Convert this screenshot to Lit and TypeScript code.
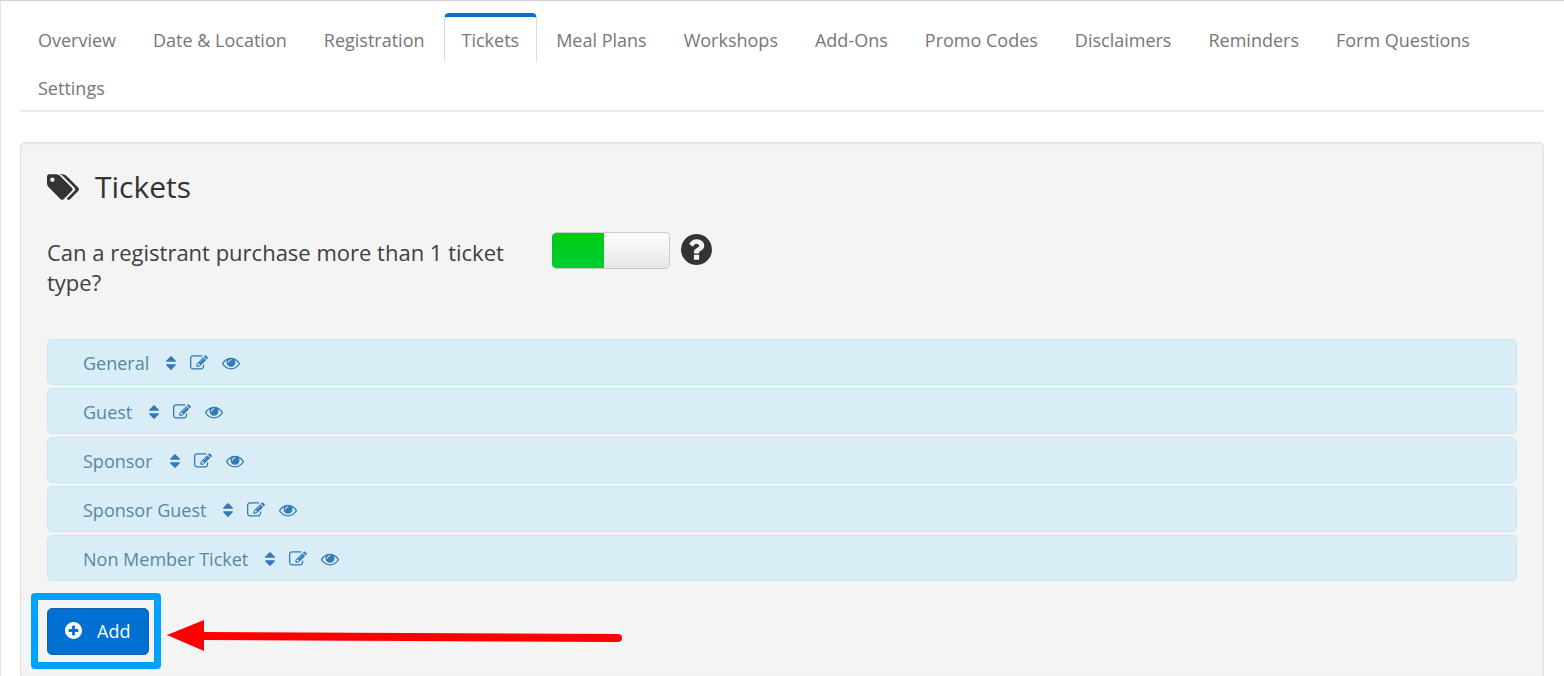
import { LitElement, html, css, svg } from "lit";
import { customElement, property, state } from "lit/decorators.js";

const DISC =
  "M1664 896q0 209-103 385.5t-279.5 279.5-385.5 103-385.5-103-279.5-279.5-103-385.5 103-385.5 279.5-279.5 385.5-103 385.5 103 279.5 279.5 103 385.5z";

const ICONS: Record<string, { box: string; d: string }> = {
  tags: {
    box: "-64 128 1899 1515",
    d: "M384 448q0-53-37.5-90.5t-90.5-37.5-90.5 37.5-37.5 90.5 37.5 90.5 90.5 37.5 90.5-37.5 37.5-90.5zm1067 576q0 53-37 90l-491 492q-39 37-91 37-53 0-90-37l-715-716q-38-37-64.5-101t-26.5-117v-416q0-52 38-90t90-38h416q53 0 117 26.5t102 64.5l715 714q37 39 37 91zm384 0q0 53-37 90l-491 492q-39 37-91 37-36 0-59-14t-53-45l470-470q37-37 37-90 0-52-37-91l-715-714q-38-38-102-64.5t-117-26.5h224q53 0 117 26.5t102 64.5l715 714q37 39 37 91z",
  },
  sort: {
    box: "384 0 1024 1792",
    d: "M1408 1088q0 26-19 45l-448 448q-19 19-45 19t-45-19l-448-448q-19-19-19-45t19-45 45-19h896q26 0 45 19t19 45zm0-384q0 26-19 45t-45 19h-896q-26 0-45-19t-19-45 19-45l448-448q19-19 45-19t45 19l448 448q19 19 19 45z",
  },
  edit: {
    box: "0 0 1792 1792",
    d: "M888 1184l116-116-152-152-116 116v56h96v96h56zm440-720q-16-16-33 1l-350 350q-17 17-1 33t33-1l350-350q17-17 1-33zm80 594v190q0 119-84.5 203.5t-203.5 84.5h-832q-119 0-203.5-84.5t-84.5-203.5v-832q0-119 84.5-203.5t203.5-84.5h832q63 0 117 25 15 7 18 23 3 17-9 29l-49 49q-14 14-32 8-23-6-45-6h-832q-66 0-113 47t-47 113v832q0 66 47 113t113 47h832q66 0 113-47t47-113v-126q0-13 9-22l64-64q15-15 35-7t20 29zm-96-738l288 288-672 672h-288v-288zm444 132l-92 92-288-288 92-92q28-28 68-28t68 28l152 152q28 28 28 68t-28 68z",
  },
  eye: {
    box: "0 0 1792 1792",
    d: "M1664 960q-152-236-381-353 61 104 61 225 0 185-131.5 316.5t-316.5 131.5-316.5-131.5-131.5-316.5q0-121 61-225-229 117-381 353 133 205 333.5 326.5t434.5 121.5 434.5-121.5 333.5-326.5zm-720-384q0-20-14-34t-34-14q-125 0-214.5 89.5t-89.5 214.5q0 20 14 34t34 14 34-14 14-34q0-86 61-147t147-61q20 0 34-14t14-34zm848 384q0 34-20 69-140 230-376.5 368.5t-499.5 138.5-499.5-139-376.5-368q-20-35-20-69t20-69q140-229 376.5-368t499.5-139 499.5 139 376.5 368q20 35 20 69z",
  },
  question: {
    box: "128 128 1536 1536",
    d: "M1024 1376v-192q0-14-9-23t-23-9h-192q-14 0-23 9t-9 23v192q0 14 9 23t23 9h192q14 0 23-9t9-23zm256-672q0-88-55.5-163t-138.5-116-170-41q-243 0-371 213-15 24 8 42l132 100q7 6 19 6 16 0 25-12 53-68 86-92 34-24 86-24 48 0 85.5 26t37.5 59q0 38-20 61t-68 45q-63 28-115.5 86.5t-52.5 125.5v36q0 14 9 23t23 9h192q14 0 23-9t9-23q0-19 21.5-49.5t54.5-49.5q32-18 49-28.5t46-35 44.5-48 28-60.5 12.5-81z" + DISC,
  },
  plus: {
    box: "128 128 1536 1536",
    d: "M1344 960v-128q0-26-19-45t-45-19h-256v-256q0-26-19-45t-45-19h-128q-26 0-45 19t-19 45v256h-256q-26 0-45 19t-19 45v128q0 26 19 45t45 19h256v256q0 26 19 45t45 19h128q26 0 45-19t19-45v-256h256q26 0 45-19t19-45z" + DISC,
  },
};

@customElement("ui-icon")
class UiIcon extends LitElement {
  @property() name = "";

  static styles = css`
    :host {
      display: block;
      flex: none;
    }
    .glyph {
      display: block;
      width: 100%;
      height: 100%;
      fill: currentColor;
      fill-rule: evenodd;
    }
  `;

  render() {
    const icon = ICONS[this.name];
    return html`<svg class="glyph" viewBox=${icon.box} aria-hidden="true">
      ${svg`<path d=${icon.d}></path>`}
    </svg>`;
  }
}

@customElement("ticket-row")
class TicketRow extends LitElement {
  @property() name = "";

  static styles = css`
    :host {
      display: flex;
      align-items: center;
      gap: 14px;
      box-sizing: border-box;
      min-height: 46px;
      padding: 2px 35px 0;
      border: 1px solid #c5e9f1;
      border-radius: 5px;
      background: #d9edf7;
      color: #5688a3;
      font-size: 18px;
      line-height: 24px;
    }
    .name {
      margin-right: 3px;
    }
    .action {
      display: block;
      padding: 0;
      border: 0;
      background: none;
      color: #337ab7;
      cursor: pointer;
    }
    .medium {
      width: 18px;
      height: 18px;
    }
    .narrow {
      width: 10px;
      height: 18px;
    }
  `;

  render() {
    return html`
      <span class="name">${this.name}</span>
      <button class="action" aria-label="Reorder ${this.name}"><ui-icon class="narrow" name="sort"></ui-icon></button>
      <button class="action" aria-label="Edit ${this.name}"><ui-icon class="medium" name="edit"></ui-icon></button>
      <button class="action" aria-label="Show ${this.name}"><ui-icon class="medium" name="eye"></ui-icon></button>
    `;
  }
}

@customElement("app-root")
class AppRoot extends LitElement {
  @state() private active = "Tickets";
  @state() private multiple = true;

  private tabs = [
    "Overview",
    "Date & Location",
    "Registration",
    "Tickets",
    "Meal Plans",
    "Workshops",
    "Add-Ons",
    "Promo Codes",
    "Disclaimers",
    "Reminders",
    "Form Questions",
    "Settings",
  ];
  private tickets = ["General", "Guest", "Sponsor", "Sponsor Guest", "Non Member Ticket"];

  static styles = css`
    :host {
      display: flex;
      flex-direction: column;
      box-sizing: border-box;
      min-height: 100vh;
      padding: 12px 20px 0 19px;
      border-top: 1px solid #cfcfcf;
      border-left: 1px solid #e4e4e4;
      background: #fff;
      color: #333;
      font-family: "Open Sans", "Noto Sans", sans-serif;
      font-size: 18px;
    }
    .tabs {
      display: flex;
      flex-wrap: wrap;
      column-gap: 1px;
      border-bottom: 2px solid #ebebeb;
    }
    .tab {
      box-sizing: border-box;
      height: 49px;
      margin-bottom: -1px;
      padding: 11px 17px 0;
      border: 1px solid transparent;
      border-top: 4px solid transparent;
      border-bottom: 0;
      border-radius: 5px 5px 0 0;
      color: #777;
      line-height: 24px;
      text-decoration: none;
    }
    .tab.active {
      border-color: #0070d2 #ddd;
    }
    .tab:last-child {
      margin-bottom: 0;
    }
    .panel {
      flex: 1;
      margin-top: 30px;
      padding: 26px 26px 20px;
      border: 1px solid #e3e3e3;
      border-bottom: 0;
      border-radius: 5px 5px 0 0;
      background: #f4f4f4;
      box-shadow: inset 0 1px 2px rgba(0, 0, 0, 0.08);
    }
    .title {
      display: flex;
      align-items: center;
      gap: 16px;
      margin: 0;
      font-size: 30px;
      font-weight: 400;
      line-height: 36px;
    }
    .tags {
      width: 32px;
      height: 26px;
    }
    .setting {
      display: flex;
      align-items: flex-start;
      gap: 20px;
      margin-top: 27px;
    }
    .question {
      flex: none;
      width: 33%;
      padding-top: 5px;
      color: #404040;
      font-size: 22px;
      line-height: 30px;
    }
    .control {
      display: flex;
      align-items: flex-start;
      gap: 11px;
    }
    .toggle {
      appearance: none;
      box-sizing: border-box;
      width: 118px;
      height: 37px;
      margin: 0;
      border: 1px solid #ccc;
      border-radius: 5px;
      background: linear-gradient(#fff, #e6e6e6);
      cursor: pointer;
    }
    .toggle:checked {
      border-color: #ccc #ccc #c4c4c4 #0fb925;
      background:
        linear-gradient(#0c1, #0c3) 0 0 / 52px 100% no-repeat border-box,
        linear-gradient(#fff, #e6e6e6);
    }
    .help {
      padding: 2px 0;
      border: 0;
      background: none;
      color: #333;
      cursor: pointer;
    }
    .large {
      width: 31px;
      height: 31px;
    }
    .list {
      display: grid;
      gap: 3px;
      margin: 42px 0 27px;
    }
    .callout {
      position: relative;
      width: max-content;
    }
    .add {
      display: flex;
      align-items: center;
      gap: 15px;
      height: 47px;
      padding: 0 18px 2px 17px;
      border: 1px solid #1560a8;
      border-radius: 5px;
      background: #0070d2;
      color: #fff;
      font: inherit;
      line-height: 24px;
      cursor: pointer;
    }
    .small {
      width: 17px;
      height: 17px;
    }
    .frame {
      position: absolute;
      inset: -15px -12px -14px -16px;
      border: 7px solid #00a2ff;
      border-radius: 4px;
      pointer-events: none;
    }
    .arrow {
      position: absolute;
      top: 10px;
      left: calc(100% + 18px);
      width: 456px;
      height: 34px;
      pointer-events: none;
    }
  `;

  render() {
    return html`
      <nav class="tabs">
        ${this.tabs.map(
          (tab) => html`<a
            class="tab ${tab === this.active ? "active" : ""}"
            href="#"
            @click=${(e: Event) => {
              e.preventDefault();
              this.active = tab;
            }}
            >${tab}</a
          >`
        )}
      </nav>
      <main class="panel">
        <h1 class="title"><ui-icon class="tags" name="tags"></ui-icon>Tickets</h1>
        <div class="setting">
          <label class="question" for="multiple">Can a registrant purchase more than 1 ticket type?</label>
          <div class="control">
            <input
              id="multiple"
              class="toggle"
              type="checkbox"
              .checked=${this.multiple}
              @change=${(e: Event) => (this.multiple = (e.target as HTMLInputElement).checked)}
            />
            <button class="help" aria-label="Help"><ui-icon class="large" name="question"></ui-icon></button>
          </div>
        </div>
        <div class="list">
          ${this.tickets.map((name) => html`<ticket-row name=${name}></ticket-row>`)}
        </div>
        <div class="callout">
          <button class="add"><ui-icon class="small" name="plus"></ui-icon>Add</button>
          <div class="frame"></div>
          <svg class="arrow" viewBox="0 0 456 34" aria-hidden="true">
            <path d="M0 17L37 2V33Z" fill="#f00"></path>
            <path d="M34 18L451 20" stroke="#f00" stroke-width="8" stroke-linecap="round"></path>
          </svg>
        </div>
      </main>
    `;
  }
}
